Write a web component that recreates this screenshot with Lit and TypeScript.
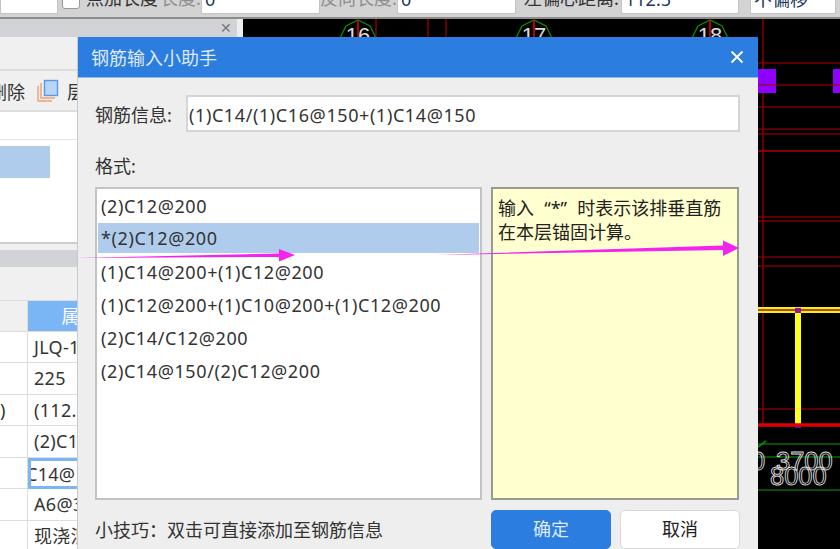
import { LitElement, html, css, svg } from "lit";
import { customElement } from "lit/decorators.js";

const FORMATS = [
  "(2)C12@200",
  "*(2)C12@200",
  "(1)C14@200+(1)C12@200",
  "(1)C12@200+(1)C10@200+(1)C12@200",
  "(2)C14/C12@200",
  "(2)C14@150/(2)C12@200",
];
const ROWS: [string, string, boolean?][] = [
  ["", "JLQ-1"],
  ["", "225"],
  [")", "(112.5)"],
  ["", "(2)C12@200"],
  ["", "(1)C14@150", true],
  ["", "A6@300"],
  ["", "现浇混凝土"],
];

@customElement("app-root")
export class AppRoot extends LitElement {
  static styles = css`
    :host {
      display: block;
      position: relative;
      width: 840px;
      height: 549px;
      overflow: hidden;
      background: #eee;
      font-family: "Noto Sans", "Noto Sans CJK SC", sans-serif;
      font-size: 18px;
      color: #333;
    }
    .topbar {
      display: flex;
      align-items: flex-end;
      height: 17px;
      background: #d3d3d3;
      border-bottom: 2px solid #8c8c8c;
      overflow: hidden;
    }
    .tb-item {
      flex: none;
      height: 34px;
      line-height: 36px;
      margin-bottom: 3px;
      white-space: nowrap;
    }
    .tb-input {
      background: #fff;
      border: 1px solid #c4c4c4;
      box-sizing: border-box;
      padding-left: 3px;
      color: #22365a;
    }
    .tb-check {
      width: 18px;
      height: 26px;
      margin-left: 4px;
      margin-right: 6px;
      margin-bottom: 8px;
      background: #fff;
      border: 1px solid #999;
      border-radius: 3px;
      box-sizing: border-box;
    }
    .muted { color: #8f8f8f; }
    .main { display: flex; height: 530px; }
    .left { width: 243px; flex: none; background: #eceef0; }
    .panel { width: 237px; height: 100%; background: #f0f0f0; display: flex; flex-direction: column; overflow: hidden; }
    .panel-tab {
      height: 18px;
      background: #d1d3d7;
      display: flex;
      justify-content: flex-end;
      align-items: center;
      padding-right: 5px;
      color: #777;
      font-size: 14px;
      line-height: 18px;
      flex: none;
    }
    .blank-row { height: 32px; flex: none; border-bottom: 2px solid #ddd; }
    .tools {
      height: 39px;
      flex: none;
      display: flex;
      align-items: center;
      gap: 12px;
      margin-left: -11px;
      border-bottom: 2px solid #ddd;
      white-space: nowrap;
    }
    .tools svg { flex: none; margin-right: -4px; }
    .tree { height: 130px; flex: none; background: #fff; border-bottom: 2px solid #ccc; }
    .tree-head { height: 27px; border-bottom: 1px solid #e6e6e6; }
    .tree-sel { width: 50px; height: 32px; margin-top: 6px; background: #b0ccec; }
    .band-gap { height: 6px; flex: none; background: #f0f0f0; }
    .band { height: 17px; flex: none; background: #d1d3d7; }
    .subhead { height: 33px; flex: none; }
    .table { display: grid; grid-template-columns: 28px 130px; grid-auto-rows: 31.5px; background: #fff; }
    .th { background: #f0f0f0; border: 1px solid #ddd; border-width: 1px 1px 1px 0; }
    .th.prop { background: #7ab6f5; color: #fff; text-align: center; line-height: 30px; padding-right: 8px; white-space: nowrap; overflow: hidden; }
    .td {
      background: #fff;
      border-bottom: 1px solid #ddd;
      border-right: 1px solid #ddd;
      box-sizing: border-box;
      line-height: 31px;
      white-space: nowrap;
      overflow: hidden;
      padding-left: 6px;
      letter-spacing: 0.3px;
    }
    .td.key { padding-left: 0; }
    .td.active { border: 3px solid #7ab6f5; padding-left: 0; line-height: 26px; }
    .td.active span { display: block; margin-left: -27px; }
    .canvas { flex: 1; background: #000; min-width: 0; }
    .canvas svg { display: block; }

    .dialog {
      position: absolute;
      left: 77px;
      top: 37px;
      width: 681px;
      height: 512px;
      box-sizing: border-box;
      background: #eee;
      border-left: 1px solid #c4c9d2;
      display: flex;
      flex-direction: column;
    }
    .title {
      height: 40px;
      flex: none;
      background: #2b7de0;
      border-bottom: 1px solid #8fbcf0;
      display: flex;
      align-items: center;
      justify-content: space-between;
      padding: 0 14px 0 13px;
      color: #dfeafa;
    }
    .body {
      flex: 1;
      min-height: 0;
      padding: 17px 18px 0 17px;
      display: flex;
      flex-direction: column;
    }
    .info { display: flex; align-items: center; height: 37px; flex: none; }
    .info label { width: 91px; flex: none; }
    .info .value {
      flex: 1;
      height: 37px;
      line-height: 36px;
      box-sizing: border-box;
      background: #fff;
      border: 2px solid #d2d5da;
      padding-left: 1px;
      letter-spacing: 0.6px;
    }
    .fmt-label { height: 55px; line-height: 68px; flex: none; }
    .columns { display: flex; gap: 9px; height: 313px; flex: none; }
    .list {
      width: 387px;
      box-sizing: border-box;
      background: #fff;
      border: 2px solid #c3c3c3;
      padding: 1px;
    }
    .item { height: 33px; line-height: 32px; padding-left: 3px; letter-spacing: 0.6px; }
    .item.sel { height: 30px; line-height: 31px; margin-bottom: 3px; background: #b0ccec; }
    .note {
      width: 248px;
      box-sizing: border-box;
      background: #ffffcf;
      border: 2px solid #9a9a90;
      padding: 7px 5px;
      line-height: 24px;
      color: #222;
      white-space: nowrap;
      word-spacing: 5.5px;
    }
    .footer { flex: 1; display: flex; align-items: flex-start; padding-top: 10px; gap: 9px; }
    .tip { width: 387px; flex: none; line-height: 40px; white-space: nowrap; }
    .btn {
      flex: none;
      width: 120px;
      height: 39px;
      box-sizing: border-box;
      text-align: center;
      line-height: 37px;
      border-radius: 5px;
      background: #fff;
      border: 1px solid #d8d8d8;
      color: #222;
    }
    .btn.primary { background: #2b7de0; border-color: #2b7de0; color: #dfeafa; }
    .arrows { position: absolute; left: 0; top: 0; pointer-events: none; }
  `;

  private canvasArt() {
    const hDark = [63, 85, 107, 129, 134, 217, 221, 257, 266, 409];
    const vDark = [376, 428, 446, 763];
    const heads: [number, string][] = [[358, "16"], [534, "17"], [710, "18"]];
    return svg`
      <svg width="597" height="530" viewBox="243 19 597 530">
        ${hDark.map((y) => svg`<line x1="243" x2="840" y1=${y} y2=${y} stroke="#7a0000" stroke-width="1.6"/>`)}
        <line x1="243" x2="840" y1="151" y2="151" stroke="#b00000" stroke-width="1.6"/>
        ${vDark.map((x) => svg`<line x1=${x} x2=${x} y1="19" y2="425" stroke="#800000" stroke-width="1.6"/>`)}
        ${heads.map(([x, t]) => svg`
          <polygon points="${x - 17},${36} ${x - 12},${26} ${x},${20} ${x + 12},${26} ${x + 17},${36} ${x + 17},${50} ${x - 17},${50}" fill="none" stroke="#0a8a0a" stroke-width="1.3"/>
          <text x=${x} y="43" text-anchor="middle" font-family="Liberation Sans, sans-serif" font-size="22" fill="#ddd">${t}</text>
          <line x1=${x} x2=${x} y1="20" y2="37" stroke="#e00000" stroke-width="1.6"/>
        `)}
        <rect x="758" y="69" width="18" height="24" fill="#8f00ff"/>
        <rect x="833" y="69" width="7" height="24" fill="#8f00ff"/>
        <line x1="758" x2="776" y1="85" y2="85" stroke="#9c0050" stroke-width="1.6"/>
        <line x1="833" x2="840" y1="85" y2="85" stroke="#9c0050" stroke-width="1.6"/>
        <line x1="758" x2="840" y1="310" y2="310" stroke="#f4ee1e" stroke-width="6"/>
        <line x1="758" x2="840" y1="310" y2="310" stroke="#a01a00" stroke-width="1.6"/>
        <line x1="798" x2="798" y1="312" y2="424" stroke="#ffff20" stroke-width="6"/>
        <rect x="795" y="308" width="6" height="5" fill="#8a1a9a"/>
        <rect x="795" y="424" width="6" height="4" fill="#5a10b0"/>
        <line x1="758" x2="840" y1="425" y2="425" stroke="#e00000" stroke-width="3.5"/>
        <line x1="758" x2="840" y1="444" y2="444" stroke="#066a06" stroke-width="1.6"/>
        <line x1="758" x2="840" y1="457" y2="457" stroke="#066a06" stroke-width="1.6"/>
        <line x1="758" x2="840" y1="490" y2="490" stroke="#066a06" stroke-width="1.6"/>
        <line x1="758" x2="766" y1="447" y2="441" stroke="#0a8a0a" stroke-width="1.6"/>
        <g font-family="Liberation Sans, sans-serif" font-size="25.5" fill="none" stroke="#ddd" stroke-width="0.9">
          <text x="751" y="470">0</text>
          <text x="776" y="470">3700</text>
          <text x="770" y="485">8000</text>
        </g>
      </svg>
    `;
  }

  render() {
    return html`
      <div class="topbar">
        <div class="tb-item tb-input" style="width:58px"></div>
        <div class="tb-item tb-check"></div>
        <div class="tb-item" style="width:74px">点加长度</div>
        <div class="tb-item muted" style="width:41px">长度:</div>
        <div class="tb-item tb-input" style="width:119px">0</div>
        <div class="tb-item muted" style="width:77px">反向长度:</div>
        <div class="tb-item tb-input" style="width:119px">0</div>
        <div class="tb-item" style="width:8px"></div>
        <div class="tb-item" style="width:97px">左偏心距离:</div>
        <div class="tb-item tb-input" style="width:118px">112.5</div>
        <div class="tb-item" style="width:11px"></div>
        <div class="tb-item tb-input" style="width:86px">不偏移</div>
      </div>
      <div class="main">
        <div class="left">
          <div class="panel">
            <div class="panel-tab">✕</div>
            <div class="blank-row"></div>
            <div class="tools">
              <span>删除</span>
              <svg width="22" height="24" viewBox="0 0 22 24">
                <path d="M1 8v15h14M4 5v15h14" fill="none" stroke="#f0a070" stroke-width="1.4" transform="translate(0 -1)"/>
                <rect x="7.5" y="1.5" width="13" height="15" fill="#b8d4f8" stroke="#5b9ae0" stroke-width="1.4"/>
              </svg>
              <span>层间复制</span>
            </div>
            <div class="tree">
              <div class="tree-head"></div>
              <div class="tree-sel"></div>
            </div>
            <div class="band-gap"></div>
            <div class="band"></div>
            <div class="subhead"></div>
            <div class="table">
              <div class="th"></div>
              <div class="th prop">属性值</div>
              ${ROWS.map(([k, v, active]) => html`
                <div class="td key">${k}</div>
                <div class="td ${active ? "active" : ""}"><span>${v}</span></div>
              `)}
            </div>
          </div>
        </div>
        <div class="canvas">${this.canvasArt()}</div>
      </div>

      <div class="dialog">
        <div class="title">
          <span>钢筋输入小助手</span>
          <svg width="14" height="14" viewBox="0 0 14 14"><path d="M1.5 1.5l11 11M12.5 1.5l-11 11" stroke="#fff" stroke-width="1.8"/></svg>
        </div>
        <div class="body">
          <div class="info">
            <label>钢筋信息:</label>
            <div class="value">(1)C14/(1)C16@150+(1)C14@150</div>
          </div>
          <div class="fmt-label">格式:</div>
          <div class="columns">
            <div class="list">
              ${FORMATS.map((f, i) => html`<div class="item ${i === 1 ? "sel" : ""}">${f}</div>`)}
            </div>
            <div class="note">输入 “*” 时表示该排垂直筋<br />在本层锚固计算。</div>
          </div>
          <div class="footer">
            <div class="tip">小技巧：双击可直接添加至钢筋信息</div>
            <div class="btn primary">确定</div>
            <div class="btn">取消</div>
          </div>
        </div>
      </div>

      <svg class="arrows" width="840" height="549" viewBox="0 0 840 549">
        <polygon points="76,258 279,253.5 279,249 295,255 279,261.5 279,257" fill="#f424ee"/>
        <polygon points="436,255 723,245.5 723,240.5 739,248 723,256 723,250" fill="#f424ee"/>
      </svg>
    `;
  }
}
